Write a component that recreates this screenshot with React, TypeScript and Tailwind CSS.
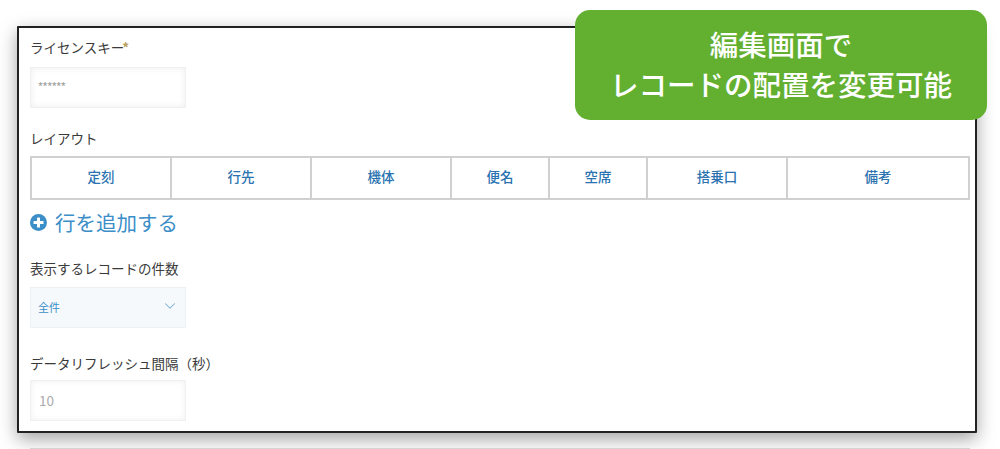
import { ChevronDown } from 'lucide-react';

const font = { fontFamily: '"Noto Sans CJK JP", "Liberation Sans", sans-serif' };

const columns = [
  { name: '定刻', width: 'w-[140px]' },
  { name: '行先', width: 'w-[140px]' },
  { name: '機体', width: 'w-[140px]' },
  { name: '便名', width: 'w-[98px]' },
  { name: '空席', width: 'w-[98px]' },
  { name: '搭乗口', width: 'w-[140px]' },
  { name: '備考', width: 'flex-1' },
];

export default function App() {
  return (
    <div style={font} className="relative w-[1000px] h-[449px] overflow-hidden bg-white pt-[26px] pl-[17px]">
      {/* settings card */}
      <div className="w-[960px] h-[407px] bg-white border-2 border-[#222222] rounded-[1px] pl-[11px] pr-[6px] pt-[10px] shadow-[0_6px_18px_rgba(0,0,0,0.36)]">
        <div className="h-[20px] flex items-center text-[13.5px] leading-none text-[#3a3a3a]">
          ライセンスキー<span className="text-[#b5a05c] -ml-[2px] font-bold">*</span>
        </div>
        <div className="mt-[9px] w-[156px] h-[41px] flex items-center pl-[7px] pb-[4px] bg-white border border-[#f0f0f0] shadow-[inset_0_0_7px_rgba(0,0,0,0.07)] text-[10px] font-bold leading-none text-[#aaaaaa] tracking-[-0.5px]">
          ******
        </div>

        <div className="mt-[21px] h-[20px] flex items-center text-[13.5px] leading-none text-[#3a3a3a]">レイアウト</div>
        <div className="mt-[7px] w-[940px] h-[44px] flex border-2 border-[#d0d0d0] bg-white">
          {columns.map((col, i) => (
            <div
              key={col.name}
              className={`${col.width} flex items-center justify-center pb-[2px] text-[13.5px] font-medium leading-none text-[#2a72b0] border-[#d0d0d0] ${i < columns.length - 1 ? 'border-r-2' : ''}`}
            >
              {col.name}
            </div>
          ))}
        </div>

        <div className="mt-[9px] h-[26px] flex items-center gap-[8px] text-[20.5px] leading-none text-[#3b8ec8]">
          <svg width="17" height="17" viewBox="0 0 17 17" className="shrink-0">
            <circle cx="8.5" cy="8.5" r="8.5" fill="#3b8ec8" />
            <rect x="7" y="3.5" width="3" height="10" rx="0.5" fill="#ffffff" />
            <rect x="3.5" y="7" width="10" height="3" rx="0.5" fill="#ffffff" />
          </svg>
          行を追加する
        </div>

        <div className="mt-[24px] h-[20px] flex items-center text-[13.5px] leading-none text-[#3a3a3a]">表示するレコードの件数</div>
        <div className="mt-[8px] w-[156px] h-[41px] flex items-center justify-between pl-[7px] pr-[6px] bg-[#f6f9fb] border border-[#eef1f3] text-[11px] leading-none text-[#3b8ec8]">
          全件
          <ChevronDown className="w-[18px] h-[18px] text-[#7aaed0] -mt-[3px]" strokeWidth={1.4} />
        </div>

        <div className="mt-[26px] h-[20px] flex items-center text-[13.5px] leading-none text-[#3a3a3a] [text-spacing-trim:space-all]">データリフレッシュ間隔（秒）</div>
        <div className="mt-[6px] w-[156px] h-[41px] flex items-center pl-[8px] bg-white border border-[#f0f0f0] shadow-[inset_0_0_7px_rgba(0,0,0,0.06)] text-[13.5px] leading-none text-[#aaaaaa]">
          10
        </div>
      </div>

      {/* callout over the card */}
      <div className="absolute left-[575px] top-[10px] w-[412px] h-[110px] rounded-[15px] bg-[#63b031] flex flex-col items-center justify-center pb-[2px] text-[28.5px] leading-[40px] font-medium text-white">
        <div>編集画面で</div>
        <div>レコードの配置を変更可能</div>
      </div>

      {/* edge of the next block, cut off by the crop */}
      <div className="absolute left-[30px] right-[30px] bottom-0 h-[1px] bg-[#d4d4d4]" />
    </div>
  );
}
